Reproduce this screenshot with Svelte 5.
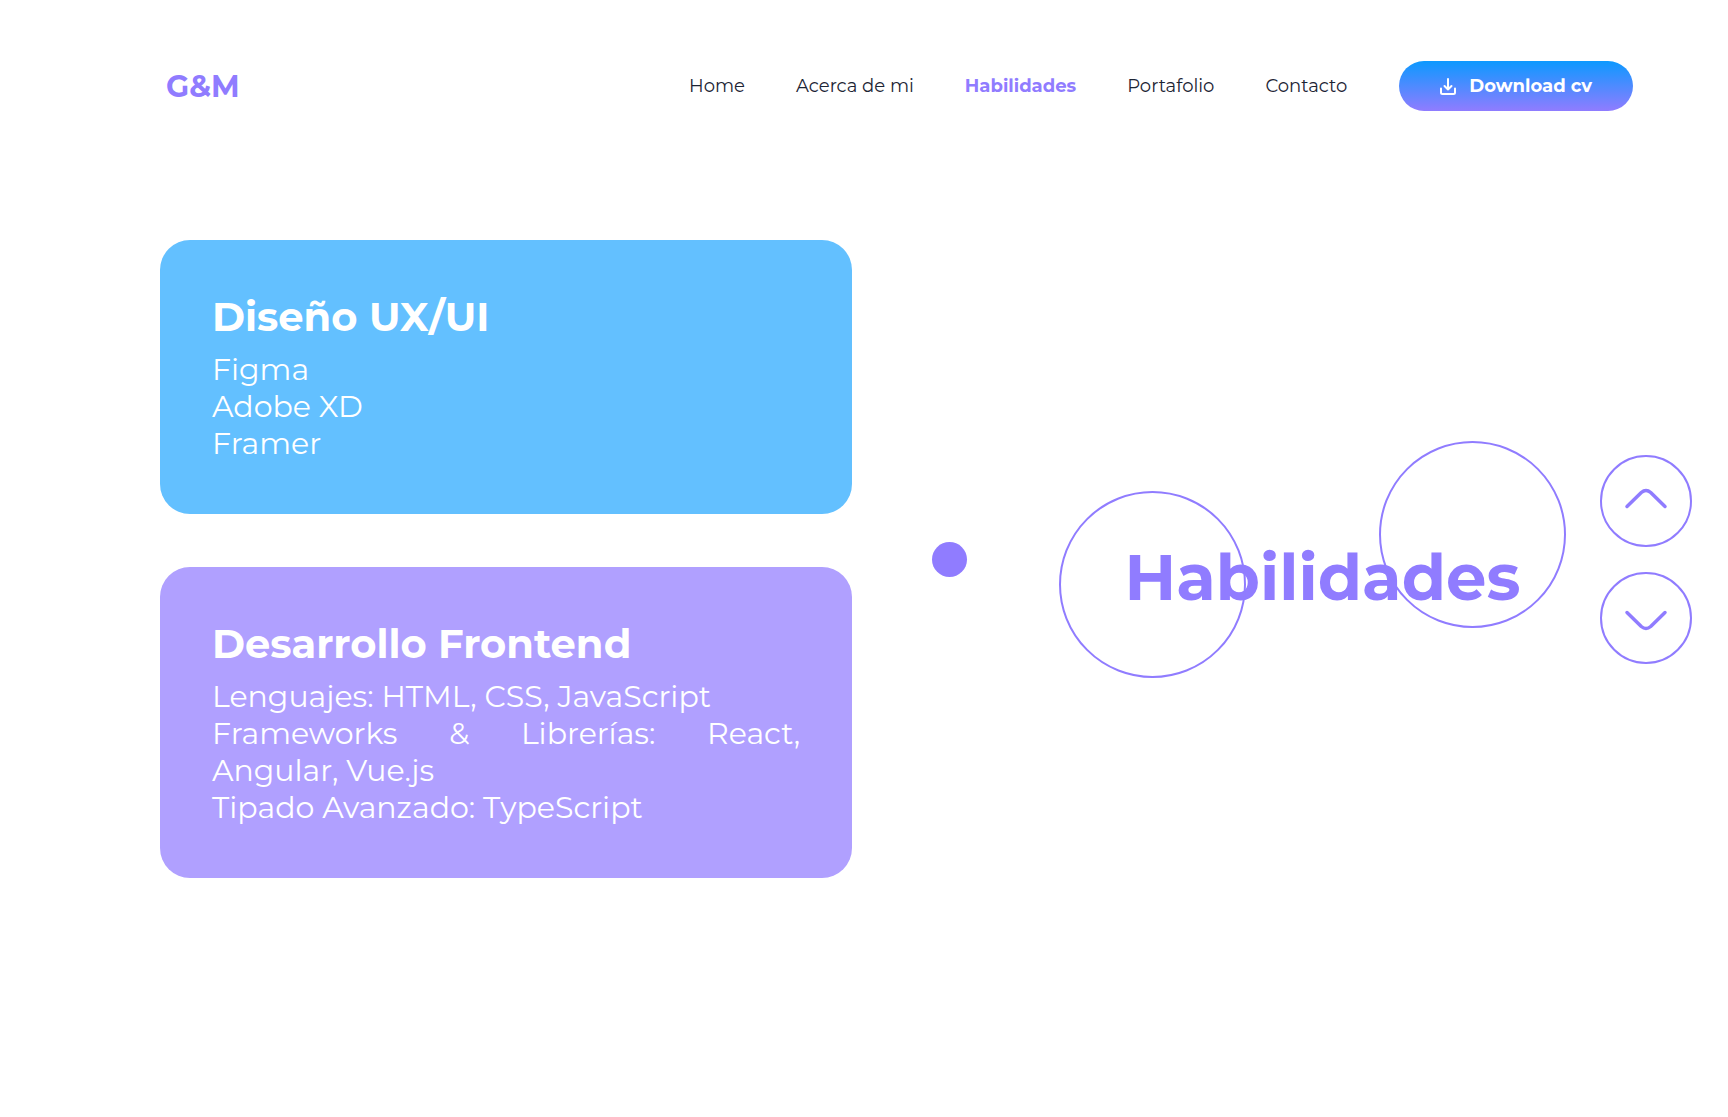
<script>
  const links = ['Home', 'Acerca de mi', 'Habilidades', 'Portafolio', 'Contacto'];
  let active = $state('Habilidades');

  const cards = [
    { tone: 'blue', title: 'Diseño UX/UI', items: ['Figma', 'Adobe XD', 'Framer'] },
    {
      tone: 'violet',
      title: 'Desarrollo Frontend',
      items: [
        'Lenguajes: HTML, CSS, JavaScript',
        'Frameworks & Librerías: React, Angular, Vue.js',
        'Tipado Avanzado: TypeScript'
      ]
    }
  ];
</script>

<header>
  <a class="logo" href="#home">G&amp;M</a>
  <div class="menu">
    <nav>
      {#each links as link}
        <a
          href="#{link}"
          class:active={active === link}
          aria-current={active === link ? 'page' : undefined}
          onclick={() => (active = link)}>{link}</a>
      {/each}
    </nav>
    <button class="download">
      <svg width="16" height="17" viewBox="0 0 16 17" aria-hidden="true">
        <path d="M8 1V11.5M4.5 8L8 11.5L11.5 8M1 10.5V14.5Q1 16 2.5 16H13.5Q15 16 15 14.5V10.5" />
      </svg>
      Download cv
    </button>
  </div>
</header>

<main>
  <section class="cards">
    {#each cards as card}
      <article class={card.tone}>
        <h2>{card.title}</h2>
        <ul>
          {#each card.items as item}
            <li>{item}</li>
          {/each}
        </ul>
      </article>
    {/each}
  </section>
  <span class="dot"></span>
  <div class="heading">
    <span class="ring low"></span>
    <span class="ring high"></span>
    <h1>Habilidades</h1>
  </div>
  <div class="arrows">
    <button aria-label="Anterior">
      <svg viewBox="0 0 92 92" aria-hidden="true">
        <path d="M27 51.5L41.3 37.5Q46 33.5 50.7 37.5L65 51.5" />
      </svg>
    </button>
    <button aria-label="Siguiente">
      <svg viewBox="0 0 92 92" aria-hidden="true">
        <path d="M27 40.5L41.3 54.5Q46 58.5 50.7 54.5L65 40.5" />
      </svg>
    </button>
  </div>
</main>

<style>
  :global(body) {
    background: #fff;
    font-family: Montserrat, Inter, 'Open Sans', sans-serif;
  }
  header {
    display: flex;
    justify-content: space-between;
    align-items: center;
    padding: 61px 95px 0 166px;
  }
  a {
    color: #1c2434;
    text-decoration: none;
  }
  .logo {
    color: #907cff;
    font-size: 30px;
    font-weight: 700;
  }
  .menu,
  nav {
    display: flex;
    align-items: center;
    gap: 51px;
  }
  .menu {
    gap: 52px;
  }
  nav a {
    font-size: 18px;
    white-space: nowrap;
  }
  nav .active {
    color: #907cff;
    font-weight: 700;
  }
  button {
    border: 0;
    padding: 0;
    background: none;
    font-family: inherit;
    cursor: pointer;
  }
  svg {
    fill: none;
    stroke: currentColor;
    stroke-linecap: round;
    stroke-linejoin: round;
  }
  .download {
    display: flex;
    align-items: center;
    gap: 13px;
    height: 50px;
    padding: 0 41px;
    border-radius: 25px;
    background: linear-gradient(#0c99ff, #907cff);
    color: #fff;
    font-size: 18px;
    font-weight: 700;
    white-space: nowrap;
  }
  .download svg {
    stroke-width: 2;
  }
  main {
    display: flex;
    align-items: center;
    padding: 129px 36px 60px 160px;
  }
  .cards {
    flex: 1;
    display: grid;
    gap: 53px;
  }
  article {
    padding: 52px;
    border-radius: 30px;
    color: #fff;
  }
  .blue {
    background: #63c0ff;
  }
  .violet {
    background: #b0a0ff;
  }
  h1,
  h2,
  ul {
    margin: 0;
  }
  h2 {
    margin-bottom: 10px;
    font-size: 40px;
    line-height: 49px;
    font-weight: 700;
  }
  ul {
    padding: 0;
    list-style: none;
    font-size: 30px;
    line-height: 37px;
    font-weight: 400;
    text-align: justify;
  }
  .dot {
    width: 35px;
    height: 35px;
    margin: 0 92px 0 80px;
    border-radius: 50%;
    background: #907cff;
  }
  .heading {
    position: relative;
    display: flex;
    align-items: center;
    justify-content: center;
    width: 507px;
    height: 237px;
    margin-right: 34px;
  }
  .ring {
    position: absolute;
    box-sizing: border-box;
    width: 187px;
    height: 187px;
    border: 2px solid #907cff;
    border-radius: 50%;
  }
  .low {
    left: 0;
    bottom: 0;
  }
  .high {
    right: 0;
    top: 0;
  }
  h1 {
    padding: 36px 0 0 20px;
    color: #907cff;
    font-size: 64px;
    line-height: 80px;
    font-weight: 700;
  }
  .arrows {
    display: grid;
    gap: 25px;
  }
  .arrows button {
    box-sizing: border-box;
    display: grid;
    width: 92px;
    height: 92px;
    border: 2px solid #907cff;
    border-radius: 50%;
    color: #907cff;
  }
  .arrows svg {
    margin: -2px;
    stroke-width: 3.5;
  }
</style>
